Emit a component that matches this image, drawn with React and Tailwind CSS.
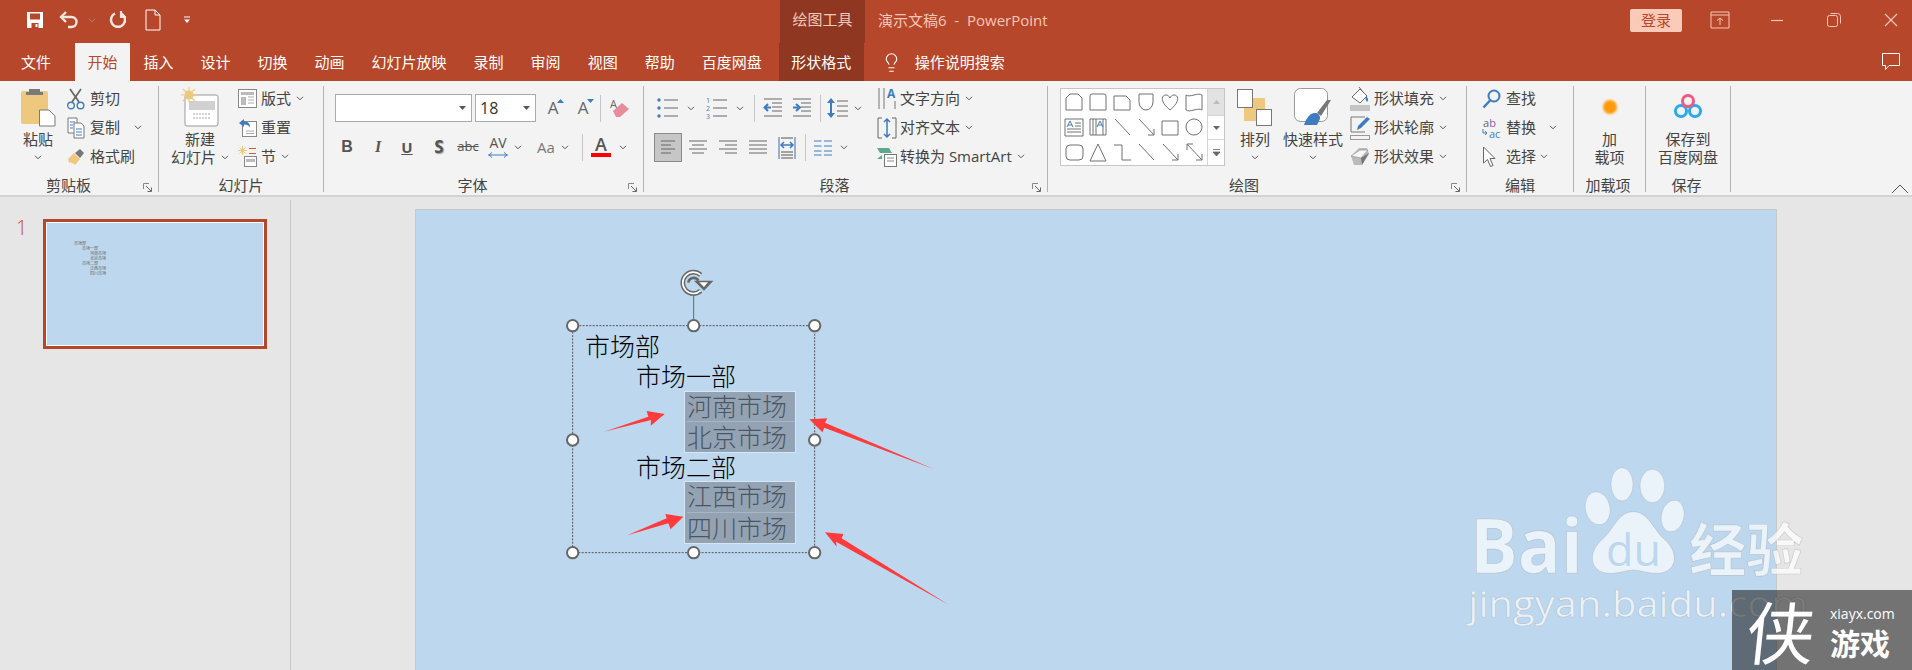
import React from "react";
import { Lightbulb } from "lucide-react";

const B = "#3f7cbf", T = "#edc87e";

const Chev = ({ className = "" }) => (
  <svg width="8" height="5" viewBox="0 0 8 5" className={`shrink-0 ${className}`}>
    <path d="M1 .8l3 3 3-3" fill="none" stroke="#555" strokeWidth="1" />
  </svg>
);
const Launcher = () => (
  <svg width="10" height="10" viewBox="0 0 10 10" className="absolute right-[5px] bottom-[-1px]">
    <path d="M.5 6V.5H6" fill="none" stroke="#888" />
    <path d="M3 3l5 5M8.5 4.500v4h-4" fill="none" stroke="#666" />
  </svg>
);
const VSep = ({ className = "" }) => <div className={`w-px h-[27px] bg-[#c6c6c6] shrink-0 ${className}`} />;

const Row = ({ icon, label, chev, w = "w-[23px]" }) => (
  <div className="flex items-center h-[29px] whitespace-nowrap">
    <span className={`${w} shrink-0 flex items-center`}>{icon}</span>
    <span>{label}</span>
    {chev && <Chev className={chev} />}
  </div>
);

const Big = ({ w, icon, first, second, chevLine, className = "" }) => (
  <div className={`flex flex-col items-center shrink-0 ${w} ${className}`}>
    <div className="h-[46px] flex items-center justify-center">{icon}</div>
    <div className="leading-[18px] whitespace-nowrap">{first}</div>
    <div className="h-[18px] leading-[18px] whitespace-nowrap flex items-center justify-center gap-[5px]">
      {second}
      {chevLine && <Chev />}
    </div>
  </div>
);

const Group = ({ w, label, pad = "", launcher, children }) => (
  <div className={`relative h-[106px] flex flex-col justify-between border-r border-[#b4b4b4] shrink-0 ${w}`}>
    <div className="flex -mt-[2px]">{children}</div>
    <div className={`h-[12px] mb-[1px] leading-[12px] text-center whitespace-nowrap ${pad}`}>{label}</div>
    {launcher && <Launcher />}
  </div>
);

/* Icons */
const Save = () => (
  <svg width="18" height="18" viewBox="0 0 18 18">
    <path d="M1 1h16v16H1z" fill="#fff" />
    <path d="M4 2.500h10v6H4zM5.500 12h7v5h-7z" fill="#b7472a" />
    <path d="M9.500 13h2v3h-2z" fill="#fff" />
  </svg>
);
const Undo = () => (
  <svg width="20" height="18" viewBox="0 0 20 18">
    <path d="M2.500 6h10a5 5 0 0 1 0 10H9" fill="none" stroke="#f4e6e0" strokeWidth="2.400" />
    <path d="M7 1L2 6l5 5" fill="none" stroke="#f4e6e0" strokeWidth="2.400" />
  </svg>
);
const Redo = () => (
  <svg width="18" height="20" viewBox="0 0 18 20">
    <path d="M6 3.500a7 7 0 1 0 6 0" fill="none" stroke="#f4e6e0" strokeWidth="2.400" />
    <path d="M12 1v6h5" fill="none" stroke="#f4e6e0" strokeWidth="2.200" />
  </svg>
);
const NewDoc = () => (
  <svg width="16" height="22" viewBox="0 0 16 22">
    <path d="M1 1h9l5 5v15H1z M10 1v5h5" fill="none" stroke="#fff" strokeWidth="1" />
  </svg>
);
const Custom = () => (
  <svg width="8" height="8" viewBox="0 0 8 8">
    <path d="M1 1h6" stroke="#fff" />
    <path d="M1 3.500h6L4 7z" fill="#fff" />
  </svg>
);
const Paste = () => (
  <svg width="36" height="40" viewBox="0 0 36 40">
    <rect x="1" y="4" width="27" height="33" rx="2" fill={T} />
    <path d="M9 2h11v3h3v3H6V5h3z" fill="#7a7a7a" />
    <path d="M19.500 23H29l6 6v10H19.500z" fill="#fff" stroke="#7a7a7a" />
  </svg>
);
const Scissors = () => (
  <svg width="18" height="22" viewBox="0 0 18 22">
    <path d="M3 1l9 13M14 1L5 14" stroke="#666" strokeWidth="1.700" fill="none" />
    <circle cx="4" cy="17.500" r="3.300" fill="none" stroke={B} strokeWidth="1.400" />
    <circle cx="13.500" cy="17.500" r="3.300" fill="none" stroke={B} strokeWidth="1.400" />
  </svg>
);
const Copy = () => (
  <svg width="18" height="22" viewBox="0 0 18 22">
    <path d="M1 1h9v15H1z" fill="#fff" stroke="#777" />
    <path d="M7 6h7l3 3v12H7z" fill="#fff" stroke="#777" />
    <path d="M3 5h5M3 8h3M3 11h3M9 12h6M9 15h6M9 18h6" stroke={B} />
  </svg>
);
const Painter = () => (
  <svg width="18" height="18" viewBox="0 0 18 18">
    <path d="M1 11l6-6 6 6-5 6-2-2-1 1-1-2-2 1z" fill={T} />
    <path d="M8 5l5-4 4 4-4 5z" fill="#777" />
  </svg>
);
const NewSlide = () => (
  <svg width="38" height="40" viewBox="0 0 38 40">
    <rect x="4" y="8" width="33" height="31" rx="2" fill="#fff" stroke="#999" />
    <path d="M8 14h26v9H8z" fill="#d0d0d0" />
    <path d="M12 27h18M12 31h18" stroke="#aaa" strokeDasharray="2 1" />
    <circle cx="8" cy="8" r="4.500" fill={T} />
    <path d="M8 0v16M0 8h16M2 2l12 12M14 2L2 14" stroke={T} strokeWidth="1.100" />
  </svg>
);
const Layout = () => (
  <svg width="19" height="19" viewBox="0 0 19 19">
    <rect x=".5" y=".5" width="18" height="18" fill="#fff" stroke="#888" />
    <path d="M3 3h13v3H3zM3 8h5v8H3z" fill="#bbb" />
    <path d="M10 8h6M10 11h6M10 14h6" stroke="#aaa" />
  </svg>
);
const Reset = () => (
  <svg width="19" height="19" viewBox="0 0 19 19">
    <rect x="4.500" y="3.500" width="14" height="15" fill="#fff" stroke="#888" />
    <path d="M8 13h8M8 15.500h8" stroke="#aaa" />
    <path d="M1 5l5-4v2.500c4 0 6 2 6 6-1-2-3-3-6-3V9z" fill={B} />
  </svg>
);
const Section = () => (
  <svg width="19" height="21" viewBox="0 0 19 21">
    <circle cx="4.500" cy="4.500" r="2" fill={T} />
    <path d="M4.500 0v9M0 4.500h9M1.500 1.500l6 6M7.500 1.500l-6 6" stroke={T} />
    <path d="M11 2.500h7M11 7.500h7" stroke="#c8633f" />
    <rect x="6.500" y="10.500" width="12" height="10" fill="#fff" stroke="#888" />
    <path d="M8 13h9v3H8z" fill="#bbb" />
  </svg>
);
const Eraser = () => (
  <svg width="20" height="20" viewBox="0 0 20 20">
    <path d="M3 13l9-8 7 6-9 8H6z" fill="#e88b9a" />
    <text x="0" y="10" fontSize="11" fill="#666" fontFamily="Open Sans">A</text>
  </svg>
);
const GrowA = ({ down }) => (
  <span className="relative flex items-center justify-center w-[22px] text-[17px] leading-[20px] text-[#666]">
    A
    <svg width="7" height="4" viewBox="0 0 7 4" className="absolute right-[0px] top-[1px]">
      <path d={down ? "M0 0h7L3.500 4z" : "M0 4h7L3.500 0z"} fill={B} />
    </svg>
  </span>
);
const Lines = ({ rows }) => (
  <svg width="20" height="17" viewBox="0 0 20 17">
    {rows.map((r, i) => (
      <path key={i} d={`M${r[0]} ${r[2]}H${r[1]}`} stroke="#666" />
    ))}
  </svg>
);
const Bullets = ({ nums }) => (
  <svg width="24" height="22" viewBox="0 0 24 22">
    {[3, 11, 19].map((y, i) =>
      nums ? (
        <text key={i} x="1" y={y + 3} fontSize="7" fill={B} fontFamily="Open Sans">{i + 1}</text>
      ) : (
        <circle key={i} cx="3" cy={y} r="1.700" fill={B} />
      )
    )}
    {[3, 11, 19].map((y) => (
      <path key={y} d={`M8 ${y}h14`} stroke="#666" />
    ))}
  </svg>
);
const Indent = ({ rev }) => (
  <svg width="20" height="20" viewBox="0 0 20 20">
    {[1, 5, 9, 13, 18].map((y) => (
      <path key={y} d={`M${y > 1 && y < 18 ? 9 : 1} ${y}H19`} stroke="#666" />
    ))}
    <path d={rev ? "M1 9.500h5M4 6l4 3.500L4 13" : "M8 9.500H3M5 6L1.500 9.500 5 13"} fill="none" stroke={B} strokeWidth="2" />
  </svg>
);
const LineSp = () => (
  <svg width="22" height="24" viewBox="0 0 22 24">
    <path d="M4 3v18" stroke={B} strokeWidth="2" />
    <path d="M0 7l4-5 4 5zM0 17l4 5 4-5z" fill={B} />
    <path d="M10 5h11M10 10h11M10 15h11M10 20h11" stroke="#666" />
  </svg>
);
const Columns = () => (
  <svg width="18" height="16" viewBox="0 0 18 16">
    {[1, 6, 11, 15].map((y) => (
      <path key={y} d={`M0 ${y}h7.500M10 ${y}h8`} stroke={B} />
    ))}
  </svg>
);
const Dist = () => (
  <svg width="18" height="22" viewBox="0 0 18 22">
    <path d="M1 0v22M17 0v22" stroke="#3f6fa5" />
    <path d="M3 1h12M3 15h12M3 18h12M3 21h12" stroke="#555" />
    <path d="M3 8h12M6 5L3 8l3 3M12 5l3 3-3 3" fill="none" stroke={B} strokeWidth="1.500" />
  </svg>
);
const TextDir = () => (
  <svg width="20" height="24" viewBox="0 0 20 24">
    <path d="M2 1v21M7 1v21M18 14v8" stroke="#777" />
    <text x="10" y="11" fontSize="12" fontWeight="700" fill={B} fontFamily="Open Sans">A</text>
  </svg>
);
const AlignT = () => (
  <svg width="20" height="22" viewBox="0 0 20 22">
    <path d="M5 1H1v20h4M15 1h4v20h-4" fill="none" stroke="#666" />
    <path d="M10 2v18M7 5l3-3 3 3M7 17l3 3 3-3" fill="none" stroke={B} strokeWidth="1.500" />
  </svg>
);
const Smart = () => (
  <svg width="20" height="20" viewBox="0 0 20 20">
    <path d="M0 1h12l3 5H3zM0 12h5V8z" fill="#5ea98b" />
    <rect x="7.500" y="7.500" width="12" height="12" fill="#fff" stroke="#777" />
    <path d="M10 11h7M10 14h7" stroke="#888" />
  </svg>
);
const Arrange = () => (
  <svg width="36" height="37" viewBox="0 0 36 37">
    <rect x="7" y="9" width="21" height="23" fill={T} />
    <rect x=".5" y=".5" width="15" height="18" fill="#fff" stroke="#777" />
    <rect x="19.500" y="20.500" width="15" height="16" fill="#fff" stroke="#777" />
  </svg>
);
const Quick = () => (
  <svg width="38" height="38" viewBox="0 0 38 38">
    <rect x=".5" y=".5" width="33" height="33" rx="6" fill="#fff" stroke="#999" />
    <path d="M37 12L27 28l-4-3 10-13z" fill="#777" />
    <path d="M10 37c2-6 6-13 12-12 4 1 5 5 3 8l-2 4z" fill={B} />
  </svg>
);
const Fill = () => (
  <svg width="20" height="24" viewBox="0 0 20 24">
    <path d="M2 10l8-8 7 7-7 7z" fill="#fff" stroke="#666" />
    <path d="M9 0l4 5" stroke="#666" />
    <path d="M16 9c2 2 3 4 1 6-1-1-2-3-1-6z" fill={B} />
    <rect y="18" width="20" height="6" fill="#c4c4c4" />
  </svg>
);
const Outline = () => (
  <svg width="20" height="24" viewBox="0 0 20 24">
    <path d="M15 1H1v15h14" fill="none" stroke="#777" />
    <path d="M7 14l1-4L17 1l3 2-9 9z" fill={B} />
    <rect x=".5" y="19.500" width="19" height="4" fill="#f3f3f3" stroke="#999" />
  </svg>
);
const Effect = () => (
  <svg width="20" height="20" viewBox="0 0 20 20">
    <path d="M1 9l8-8h8l2 6-7 11H4z" fill="#bbb" />
    <path d="M1 9l9-6h8l-7 8z" fill="#f6f6f6" stroke="#888" strokeWidth=".6" />
    <path d="M11 11l8-5-7 12z" fill="#777" />
  </svg>
);
const Find = () => (
  <svg width="19" height="20" viewBox="0 0 19 20">
    <circle cx="12" cy="7" r="5.500" fill="none" stroke={B} strokeWidth="2" />
    <path d="M8 11.500L1.500 18.500" stroke={B} strokeWidth="2.500" />
  </svg>
);
const Replace = () => (
  <span className="relative block w-[20px] h-[22px] text-[11px] leading-[11px] [font-family:'Open_Sans',sans-serif]">
    <span className="absolute left-[1px] top-0 text-[#666]">a<span className="text-[#8a5fb5]">b</span></span>
    <span className="absolute left-[7px] top-[11px] text-[#3f7cbf]">ac</span>
    <svg width="6" height="8" viewBox="0 0 6 8" className="absolute left-0 top-[12px]">
      <path d="M1 0v4h4M3 2l2 2-2 2" fill="none" stroke={B} />
    </svg>
  </span>
);
const Cursor = () => (
  <svg width="14" height="22" viewBox="0 0 14 22">
    <path d="M1.500 1v16l4-3.500 3 7 2.500-1-3-7h5z" fill="#fff" stroke="#666" />
  </svg>
);
const Netdisk = () => (
  <svg width="28" height="28" viewBox="0 0 28 28">
    <circle cx="7" cy="18" r="5.500" fill="none" stroke="#29a9ef" strokeWidth="3" />
    <circle cx="21" cy="18" r="5.500" fill="none" stroke="#29a9ef" strokeWidth="3" />
    <circle cx="14" cy="8" r="5.500" fill="none" stroke="#ef5a7f" strokeWidth="3" />
  </svg>
);
const shapes = [
  "M3 19V7l4-4h8l4 4v12z",
  "M5 3h12a2 2 0 0 1 2 2v14H3V5a2 2 0 0 1 2-2z",
  "M3 5h12l4 4v10H3z",
  "M4 3h14v8a7 8 0 0 1-14 0z",
  "M11 19C1 11 2 4 7 4c2 0 3 1 4 3 1-2 2-3 4-3 5 0 6 7-4 15z",
  "M3 4c4 3 12-3 16 0v15c-4-3-12 3-16 0z",
  "M2 3h18v17H2zM12 7h6M12 10h6M4 13h14M4 16h14",
  "M3 3h16v16H3zM6 3v16M9 3v16M16 3v16",
  "M4 3l15 16",
  "M4 3l15 16M19 13v6h-6",
  "M3 5h16v14H3z",
  "M11 3a8 8 0 1 0 0.010 0z",
  "M7 4h9a4 4 0 0 1 4 4v7a4 4 0 0 1-4 4H7a4 4 0 0 1-4-4V8a4 4 0 0 1 4-4z",
  "M11 3l8 17H3z",
  "M3 4h8v15h9",
  "M4 3l15 16",
  "M4 3l15 16M19 13v6h-6",
  "M4 3l15 16M4 9V3h6M19 13v6h-6",
];

const mini = [
  ["市场部", "pl-[27px]"],
  ["市场一部", "pl-[35px]"],
  ["河南市场", "pl-[43px]"],
  ["北京市场", "pl-[43px]"],
  ["市场二部", "pl-[35px]"],
  ["江西市场", "pl-[43px]"],
  ["四川市场", "pl-[43px]"],
];

export default function App() {
  return (
    <div className="w-[1912px] h-[670px] overflow-hidden flex flex-col bg-[#e6e6e6] [font-family:'Open_Sans','Noto_Sans_CJK_SC',sans-serif] text-[15px]">
      {/* title bar */}
      <div className="h-[43px] shrink-0 flex items-stretch bg-[#b7472a]">
        <div className="flex items-center pb-[3px]">
          <span className="ml-[26px]"><Save /></span>
          <span className="ml-[15px]"><Undo /></span>
          <Chev className="ml-[9px] opacity-60 invert" />
          <span className="ml-[13px]"><Redo /></span>
          <span className="ml-[18px]"><NewDoc /></span>
          <span className="ml-[22px]"><Custom /></span>
        </div>
        <div className="ml-[589px] w-[85px] shrink-0 bg-[#8f3720] flex items-center justify-center pb-[4px] text-[#f3c9bb] whitespace-nowrap">绘图工具</div>
        <div className="ml-[13px] flex items-center pb-[3px] text-[#f6c6b6] whitespace-pre">演示文稿6  -  PowerPoint</div>
        <div className="flex-1" />
        <div className="flex items-center pb-[3px]">
          <div className="w-[52px] h-[23px] rounded-[2px] bg-[#fccab8] text-[#b7472a] leading-[23px] text-center">登录</div>
          <svg width="20" height="18" viewBox="0 0 20 18" className="ml-[28px]">
            <path d="M1 1h18v16H1zM1 4h18M10 14V7M7 9.500L10 7l3 2.500" fill="none" stroke="#f6c6b6" />
          </svg>
          <svg width="16" height="3" viewBox="0 0 16 3" className="ml-[39px]"><path d="M2 1.500h12" stroke="#f6c6b6" strokeWidth="1.200" /></svg>
          <svg width="16" height="16" viewBox="0 0 16 16" className="ml-[41px]">
            <path d="M1.500 5.500a2 2 0 0 1 2-2h6a2 2 0 0 1 2 2v7a2 2 0 0 1-2 2h-6a2 2 0 0 1-2-2zM4.500 1.500h7a3 3 0 0 1 3 3v7" fill="none" stroke="#f6c6b6" />
          </svg>
          <svg width="16" height="16" viewBox="0 0 16 16" className="ml-[41px] mr-[13px]">
            <path d="M2 2l12 12M14 2L2 14" stroke="#f6c6b6" strokeWidth="1.200" />
          </svg>
        </div>
      </div>
      {/* tabs */}
      <div className="h-[38px] shrink-0 flex items-stretch bg-[#b7472a] text-white whitespace-nowrap pl-[7.500px]">
        <div className="px-[13.500px] flex items-center">文件</div>
        <div className="ml-[10.500px] w-[55px] flex items-center justify-center bg-[#f3f3f3] text-[#b7472a]">开始</div>
        {["插入", "设计", "切换", "动画", "幻灯片放映", "录制", "审阅", "视图", "帮助", "百度网盘"].map((t) => (
          <div key={t} className="px-[13.500px] flex items-center">{t}</div>
        ))}
        <div className="ml-[3.500px] w-[85px] flex items-center justify-center bg-[#8f3720]">形状格式</div>
        <div className="ml-[17px] flex items-center"><Lightbulb size={21} strokeWidth={1.300} color="#fff" /></div>
        <div className="ml-[13px] flex items-center">操作说明搜索</div>
        <div className="flex-1 flex items-center justify-end pr-[12px]">
          <svg width="18" height="18" viewBox="0 0 18 18">
            <path d="M.5.500h17v12H7l-3.500 4v-4h-3z" fill="none" stroke="#fff" />
          </svg>
        </div>
      </div>
      {/* ribbon */}
      <div className="h-[116px] shrink-0 flex pt-[5px] bg-[#f3f3f3] border-b-2 border-[#d2d2d2] text-[#444]">
        <Group w="w-[159px]" label="剪贴板" pad="pr-[21px]" launcher>
          <Big w="w-[50px]" className="ml-[13px]" icon={<Paste />} first="粘贴" second={<Chev />} />
          <div className="ml-[4px]">
            <Row icon={<Scissors />} label="剪切" />
            <Row icon={<Copy />} label="复制" chev="ml-[14px]" />
            <Row icon={<Painter />} label="格式刷" />
          </div>
        </Group>
        <Group w="w-[165px]" label="幻灯片">
          <Big w="w-[70px]" className="ml-[6px]" icon={<NewSlide />} first="新建" second="幻灯片" chevLine />
          <div className="ml-[3px]">
            <Row icon={<Layout />} label="版式" chev="ml-[5px]" />
            <Row icon={<Reset />} label="重置" />
            <Row icon={<Section />} label="节" chev="ml-[5px]" />
          </div>
        </Group>
        <Group w="w-[320px]" label="字体" pad="pr-[22px]" launcher>
          <div className="ml-[11px] mt-[10px]">
            <div className="flex items-center h-[28px]">
              <div className="w-[137px] h-[28px] bg-white border border-[#ababab] flex items-center justify-end pr-[5px]">
                <svg width="7" height="4" viewBox="0 0 7 4"><path d="M0 0h7L3.500 4z" fill="#555" /></svg>
              </div>
              <div className="ml-[3px] w-[61px] h-[28px] bg-white border border-[#ababab] flex items-center justify-between pl-[4px] pr-[5px] text-[16px] text-[#333]">
                18
                <svg width="7" height="4" viewBox="0 0 7 4"><path d="M0 0h7L3.500 4z" fill="#555" /></svg>
              </div>
              <span className="ml-[6px]"><GrowA /></span>
              <span className="ml-[8px]"><GrowA down /></span>
              <VSep className="ml-[6px]" />
              <span className="ml-[9px]"><Eraser /></span>
            </div>
            <div className="flex items-center h-[28px] mt-[11px] text-[#555]">
              <span className="w-[24px] text-center font-bold [font-family:'Liberation_Sans',sans-serif] text-[16px]">B</span>
              <span className="ml-[7px] w-[24px] text-center italic [font-family:'Liberation_Serif',serif] font-bold text-[16px]">I</span>
              <span className="ml-[5px] w-[24px] text-center underline font-bold text-[15px]">U</span>
              <span className="ml-[8px] w-[24px] text-center font-bold text-[17px] [text-shadow:1px_1px_1px_#999]">S</span>
              <span className="ml-[5px] w-[24px] text-center line-through text-[13px]">abc</span>
              <span className="ml-[6px] w-[24px] h-[24px] relative text-center text-[14px] leading-[16px]">
                AV
                <svg width="20" height="6" viewBox="0 0 20 6" className="absolute left-[2px] top-[17px]">
                  <path d="M0 3h20M4 .5L1 3l3 2.500M16 .5L19 3l-3 2.500" fill="none" stroke={B} />
                </svg>
              </span>
              <Chev className="ml-[4px]" />
              <span className="ml-[12px] w-[24px] text-center text-[15px] text-[#777]">Aa</span>
              <Chev className="ml-[3px]" />
              <VSep className="ml-[13px]" />
              <span className="ml-[8px] w-[20px] h-[28px] relative text-center text-[18px] leading-[22px] font-semibold">
                A
                <span className="absolute left-0 right-0 top-[20px] h-[4px] bg-[#ff0000]" />
              </span>
              <Chev className="ml-[8px]" />
            </div>
          </div>
        </Group>
        <Group w="w-[404px]" label="段落" pad="pr-[22px]" launcher>
          <div className="ml-[10px] mt-[10px] w-[216px] shrink-0">
            <div className="flex items-center h-[28px]">
              <span className="ml-[2px] w-[24px]"><Bullets /></span>
              <Chev className="ml-[7px]" />
              <span className="ml-[10px] w-[24px]"><Bullets nums /></span>
              <Chev className="ml-[7px]" />
              <VSep className="ml-[10px]" />
              <span className="ml-[8px] w-[22px]"><Indent /></span>
              <span className="ml-[7px] w-[22px]"><Indent rev /></span>
              <VSep className="ml-[6px]" />
              <span className="ml-[6px] w-[22px]"><LineSp /></span>
              <Chev className="ml-[5px]" />
            </div>
            <div className="flex items-center h-[29px] mt-[11px]">
              <span className="w-[28px] h-[29px] bg-[#c6c6c6] border border-[#8a8a8a] flex items-center justify-center">
                <Lines rows={[[3, 17, 2], [3, 13, 6], [3, 17, 10], [3, 13, 14]]} />
              </span>
              <span className="ml-[6px] w-[20px]"><Lines rows={[[1, 19, 2], [4, 16, 6], [1, 19, 10], [4, 16, 14]]} /></span>
              <span className="ml-[10px] w-[20px]"><Lines rows={[[1, 19, 2], [7, 19, 6], [1, 19, 10], [7, 19, 14]]} /></span>
              <span className="ml-[10px] w-[20px]"><Lines rows={[[1, 19, 2], [1, 19, 6], [1, 19, 10], [1, 19, 14]]} /></span>
              <span className="ml-[10px] w-[18px]"><Dist /></span>
              <VSep className="ml-[9px]" />
              <span className="ml-[8px] w-[18px]"><Columns /></span>
              <Chev className="ml-[8px]" />
            </div>
          </div>
          <div className="ml-[7px]">
            <Row icon={<TextDir />} label="文字方向" chev="ml-[5px]" />
            <Row icon={<AlignT />} label="对齐文本" chev="ml-[5px]" />
            <Row icon={<Smart />} label="转换为 SmartArt" chev="ml-[5px]" />
          </div>
        </Group>
        <Group w="w-[419px]" label="绘图" pad="pr-[26px]" launcher>
          <div className="ml-[12px] mt-[4px] w-[165px] h-[78px] shrink-0 bg-white border border-[#c6c6c6] flex">
            <div className="relative w-[146px] pl-[1px] grid grid-cols-[repeat(6,24px)] grid-rows-[repeat(3,25px)] items-center justify-items-center">
              {shapes.map((d, i) => (
                <svg key={i} width="22" height="22" viewBox="0 0 22 22">
                  <path d={d} fill="none" stroke="#707070" strokeWidth="1" />
                  {i === 6 && <path d="M4 11l3-6 3 6M5 9h4" fill="none" stroke={B} />}
                  {i === 7 && <path d="M10 11l3-6 3 6M11 9h4" fill="none" stroke={B} />}
                </svg>
              ))}
            </div>
            <div className="flex-1 flex flex-col border-l border-[#d6d6d6]">
              <div className="h-[26px] bg-[#e2e2e2] flex items-center justify-center">
                <svg width="7" height="4" viewBox="0 0 7 4"><path d="M0 4h7L3.500 0z" fill="#bbb" /></svg>
              </div>
              <div className="h-[25px] border-y border-[#d6d6d6] flex items-center justify-center">
                <svg width="7" height="4" viewBox="0 0 7 4"><path d="M0 0h7L3.500 4z" fill="#666" /></svg>
              </div>
              <div className="flex-1 flex items-center justify-center">
                <svg width="7" height="7" viewBox="0 0 7 7"><path d="M0 .5h7M0 3h7L3.500 7z" stroke="#666" fill="#666" strokeWidth=".8" /></svg>
              </div>
            </div>
          </div>
          <Big w="w-[40px]" className="ml-[10px]" icon={<Arrange />} first="排列" second={<Chev />} />
          <Big w="w-[64px]" className="ml-[6px]" icon={<Quick />} first="快速样式" second={<Chev />} />
          <div className="ml-[5px]">
            <Row w="w-[24px]" icon={<Fill />} label="形状填充" chev="ml-[5px]" />
            <Row w="w-[24px]" icon={<Outline />} label="形状轮廓" chev="ml-[5px]" />
            <Row w="w-[24px]" icon={<Effect />} label="形状效果" chev="ml-[5px]" />
          </div>
        </Group>
        <Group w="w-[107px]" label="编辑">
          <div className="ml-[15px]">
            <Row w="w-[24px]" icon={<Find />} label="查找" />
            <Row w="w-[24px]" icon={<Replace />} label="替换" chev="ml-[13px]" />
            <Row w="w-[24px]" icon={<Cursor />} label="选择" chev="ml-[4px]" />
          </div>
        </Group>
        <Group w="w-[72px]" label="加载项" pad="pr-[3px]">
          <Big w="w-[71px]" icon={<span className="block w-[14px] h-[14px] rounded-full bg-[#ff9a0a] blur-[1px]" />} first="加" second="载项" />
        </Group>
        <Group w="w-[85px]" label="保存" pad="pr-[3px]">
          <Big w="w-[84px]" icon={<Netdisk />} first="保存到" second="百度网盘" />
        </Group>
        <div className="flex-1 flex items-end justify-end pr-[3px] pb-[1px]">
          <svg width="18" height="10" viewBox="0 0 18 10"><path d="M1 9l8-8 8 8" fill="none" stroke="#555" /></svg>
        </div>
      </div>
      {/* main */}
      <div className="relative flex-1 flex min-h-0">
        <div className="w-[291px] shrink-0 pt-[3px]">
          <div className="h-full border-r border-[#c6c6c6] flex pl-[16px] pt-[19px]">
            <div className="w-[27px] text-[20px] font-light leading-[16px] text-[#c64f2e] pt-[1px]">1</div>
            <div className="w-[224px] h-[130px] border-[3px] border-[#b7472a] bg-white p-px">
              <div className="h-full bg-[#bdd7ee] pt-[18px] text-[4px] leading-[5px] text-[#666]">
                {mini.map(([t, c]) => (
                  <div key={t} className={c}>{t}</div>
                ))}
              </div>
            </div>
          </div>
        </div>
        <div className="ml-[124px] mt-[12px] w-[1362px] relative bg-[#bdd7ee] border-x border-t border-[#c8c8c8]">
          {/* text box on the slide canvas */}
          <div className="absolute left-[169px] top-[121px] text-[25px] leading-[30.300px] text-black whitespace-nowrap font-light">
            <div>市场部</div>
            <div className="pl-[51px]">市场一部</div>
            <div className="ml-[99px] -my-[1px] w-[112px] pl-[2px] bg-[#94a3b3] border border-[#d7e6f4] text-[#4a5663]">
              <div className="leading-[29.300px] border-b border-[#a8b6c5]">河南市场</div>
              <div>北京市场</div>
            </div>
            <div className="pl-[51px]">市场二部</div>
            <div className="ml-[99px] -my-[1px] w-[112px] pl-[2px] bg-[#94a3b3] border border-[#d7e6f4] text-[#4a5663]">
              <div className="leading-[29.300px] border-b border-[#a8b6c5]">江西市场</div>
              <div>四川市场</div>
            </div>
          </div>
          {/* selection frame and arrows */}
          <svg width="440" height="360" viewBox="0 0 1320 1080" className="absolute left-[124px] top-[50px] pointer-events-none">
            <rect x="98" y="197" width="726" height="681" fill="none" stroke="#555" strokeWidth="3" strokeDasharray="6 4" />
            <path d="M461 105V180" stroke="#666" strokeWidth="3" />
            <path d="M482 45A32 32 0 1 0 482 92" fill="none" stroke="#666" strokeWidth="14" />
            <path d="M482 45A32 32 0 1 0 482 92" fill="none" stroke="#fff" strokeWidth="5" />
            <path d="M445 68a16 16 0 0 1 30-6" fill="none" stroke="#666" strokeWidth="8" />
            <path d="M462 62h58l-28 30z" fill="#666" />
            <path d="M478 67h26l-12 14z" fill="#fff" />
            {[[98, 197], [461, 197], [824, 197], [98, 540], [824, 540], [98, 878], [461, 878], [824, 878]].map(([x, y]) => (
              <circle key={`${x}-${y}`} cx={x} cy={y} r="17" fill="#fff" stroke="#666" strokeWidth="6" />
            ))}
            <g fill="#ff3b3b">
              <polygon points="192,515 325,470 320,453 374,462 332,497 333,480" />
              <polygon points="808,478 862,475 855,488 1183,628 853,503 847,517" />
              <polygon points="262,826 380,775 376,762 430,770 392,808 385,790" />
              <polygon points="1226,1034 905,835 910,822 855,817 890,860 888,845" />
            </g>
          </svg>
        </div>
        {/* Baidu watermark */}
        <svg width="512" height="230" viewBox="0 0 1536 690" className="absolute left-[1400px] top-[243px] pointer-events-none">
          <g fill="#fff" fillOpacity=".7" stroke="#8a8a8a" strokeOpacity=".35" strokeWidth="2">
            <ellipse cx="593" cy="205" rx="37" ry="50" transform="rotate(-12 593 205)" />
            <ellipse cx="666" cy="133" rx="33" ry="50" />
            <ellipse cx="757" cy="138" rx="37" ry="50" />
            <ellipse cx="818" cy="228" rx="34" ry="48" transform="rotate(12 818 228)" />
            <path d="M700 215c45 0 60 55 95 85 45 40 35 100-25 100-30 0-50-10-70-10s-40 10-70 10c-60 0-70-60-25-100 35-30 50-85 95-85z" />
            <text x="210" y="400" fontSize="228" fontWeight="700" textLength="338" lengthAdjust="spacingAndGlyphs" fontFamily="Open Sans">Bai</text>
            <text x="868" y="392" fontSize="170" fontWeight="700" textLength="342" lengthAdjust="spacingAndGlyphs" fontFamily="Noto Sans CJK SC">经验</text>
            <text x="205" y="530" fontSize="112" textLength="1020" lengthAdjust="spacingAndGlyphs" fontFamily="Open Sans">jingyan.baidu.com</text>
          </g>
          <text x="618" y="378" fontSize="130" fill="#bdd7ee" textLength="165" lengthAdjust="spacingAndGlyphs" fontFamily="Open Sans">du</text>
        </svg>
        {/* corner badge */}
        <div className="absolute right-0 bottom-0 w-[180px] h-[80px] bg-black/50 flex items-center pl-[15px] text-white">
          <span className="w-[72px] text-[68px] leading-[80px] [font-family:'Noto_Sans_CJK_SC',sans-serif] -skew-x-6">侠</span>
          <div className="ml-[11px] flex flex-col items-start pt-[5px]">
            <span className="text-[14px] leading-[18px]">xiayx.com</span>
            <span className="text-[30px] leading-[38px] font-bold [font-family:'Noto_Sans_CJK_SC',sans-serif]">游戏</span>
          </div>
        </div>
      </div>
    </div>
  );
}
